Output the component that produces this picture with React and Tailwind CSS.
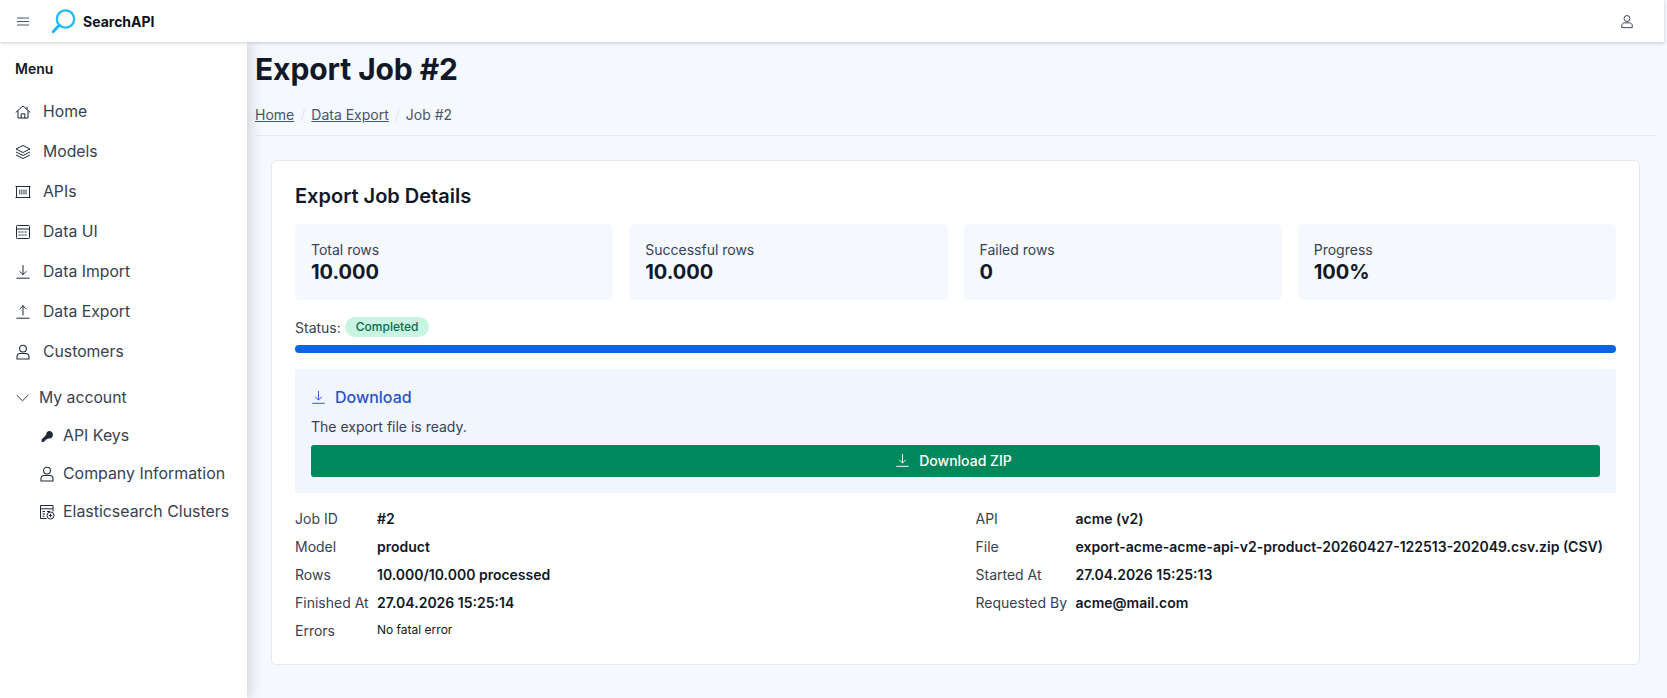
import React from "react";

function HomeIcon({ className }) {
  return (
    <svg className={className} viewBox="0 0 16 16" fill="none" stroke="currentColor" strokeWidth="1" strokeLinejoin="round" strokeLinecap="round">
      <path d="M1 8.2 8 2l7 6.2" />
      <path d="M12 3v2.4" />
      <path d="M3 7v7h10V7" />
      <path d="M6.2 14V9.8h3.6V14" />
    </svg>
  );
}

function LayersIcon({ className }) {
  return (
    <svg className={className} viewBox="0 0 16 16" fill="none" stroke="currentColor" strokeWidth="1" strokeLinejoin="round">
      <path d="M8 1.5 15 5 8 8.5 1 5z" />
      <path d="M1 8l7 3.5L15 8" />
      <path d="M1 11l7 3.5 7-3.5" />
    </svg>
  );
}

function ApiIcon({ className }) {
  return (
    <svg className={className} viewBox="0 0 16 16" fill="none" stroke="currentColor" strokeWidth="1">
      <path d="M0.5 2.5h15M0.5 13.5h15M1.5 2.5v11M14.5 2.5v11" />
      <path d="M4.8 5.5v5M6.9 5.5v5M9 5.5v5M11.1 5.5v5" strokeWidth="0.9" />
    </svg>
  );
}

function TableIcon({ className }) {
  return (
    <svg className={className} viewBox="0 0 16 16" fill="none" stroke="currentColor" strokeWidth="1">
      <rect x="1.5" y="1.5" width="13" height="13" rx="0.8" />
      <path d="M1.5 5h13" />
      <path d="M3.5 8h9M3.5 11h9" strokeDasharray="2 1" />
    </svg>
  );
}

function DownloadIcon({ className }) {
  return (
    <svg className={className} viewBox="0 0 16 16" fill="none" stroke="currentColor" strokeWidth="1" strokeLinecap="round" strokeLinejoin="round">
      <path d="M8 1.5v9M4.8 7.5 8 10.7l3.2-3.2" />
      <path d="M1.8 14.2h12.4" />
    </svg>
  );
}

function UploadIcon({ className }) {
  return (
    <svg className={className} viewBox="0 0 16 16" fill="none" stroke="currentColor" strokeWidth="1" strokeLinecap="round" strokeLinejoin="round">
      <path d="M8 11V1.8M4.8 5 8 1.8 11.2 5" />
      <path d="M1.8 14.2h12.4" />
    </svg>
  );
}

function UserIcon({ className }) {
  return (
    <svg className={className} viewBox="0 0 16 16" fill="none" stroke="currentColor" strokeWidth="1.1" strokeLinejoin="round">
      <circle cx="8" cy="4.6" r="3.4" />
      <path d="M2 15v-2.2c0-1.8 1.4-3.3 3.2-3.3h5.6c1.8 0 3.2 1.5 3.2 3.3V15z" />
    </svg>
  );
}

function KeyIcon({ className }) {
  return (
    <svg className={className} viewBox="0 0 16 16" fill="currentColor">
      <path d="M10 3a3.8 3.8 0 1 1-1 7.4l-1.2 1.2H6.6v1.2H5.2V14H2.6v-2.4l4.6-4.8A3.8 3.8 0 0 1 10 3z" />
    </svg>
  );
}

function ClusterIcon({ className }) {
  return (
    <svg className={className} viewBox="0 0 16 16" fill="none" stroke="currentColor" strokeWidth="1">
      <path d="M7.5 14.5H1.5v-13h12.5v6" />
      <path d="M1.5 4.8h12.5" />
      <path d="M3.5 7.5h2.5M3.5 10h2.5M3.5 12.2h2M8 7.5h3" />
      <circle cx="11.5" cy="11.5" r="3.5" fill="white" />
      <path d="M11.5 9.8v3.4M9.8 11.5h3.4" />
    </svg>
  );
}

function ChevronIcon({ className }) {
  return (
    <svg className={className} viewBox="0 0 14 8" fill="none" stroke="currentColor" strokeWidth="1">
      <path d="M0.7 0.8 7 7l6.3-6.2" />
    </svg>
  );
}

function MenuIcon({ className }) {
  return (
    <svg className={className} viewBox="0 0 12 9" fill="none" stroke="currentColor" strokeWidth="1">
      <path d="M0 1h12M0 4.5h12M0 8h12" />
    </svg>
  );
}

function Logo() {
  return (
    <svg width="25" height="25" viewBox="0 0 25 25" fill="none">
      <circle cx="14.5" cy="10" r="8.7" stroke="#1cbcf2" strokeWidth="2.3" />
      <path d="M8 16.5 2.3 22.5" stroke="#1cbcf2" strokeWidth="3.2" strokeLinecap="round" />
    </svg>
  );
}

const navItems = [
  { label: "Home", icon: HomeIcon },
  { label: "Models", icon: LayersIcon },
  { label: "APIs", icon: ApiIcon },
  { label: "Data UI", icon: TableIcon },
  { label: "Data Import", icon: DownloadIcon },
  { label: "Data Export", icon: UploadIcon },
  { label: "Customers", icon: UserIcon },
];

const subItems = [
  { label: "API Keys", icon: KeyIcon },
  { label: "Company Information", icon: UserIcon },
  { label: "Elasticsearch Clusters", icon: ClusterIcon },
];

const stats = [
  { label: "Total rows", value: "10.000" },
  { label: "Successful rows", value: "10.000" },
  { label: "Failed rows", value: "0" },
  { label: "Progress", value: "100%" },
];

const leftRows = [
  ["Job ID", "#2"],
  ["Model", "product"],
  ["Rows", "10.000/10.000 processed"],
  ["Finished At", "27.04.2026 15:25:14"],
];

const rightRows = [
  ["API", "acme (v2)"],
  ["File", "export-acme-acme-api-v2-product-20260427-122513-202049.csv.zip (CSV)"],
  ["Started At", "27.04.2026 15:25:13"],
  ["Requested By", "acme@mail.com"],
];

export default function App() {
  return (
    <div className="h-[698px] overflow-hidden bg-[#f5f8fc] text-[#111827] font-['Inter',sans-serif]">
      <div className="w-[1664px]">
        <header className="h-[42px] bg-white flex items-center justify-between pl-[17px] pr-[30px] shadow-[0_1px_3px_rgba(100,116,139,0.35)] relative z-20">
          <div className="flex items-center">
            <MenuIcon className="w-[12px] h-[9px] text-[#475569]" />
            <div className="ml-[22px]"><Logo /></div>
            <span className="ml-[7px] text-[14px] font-bold text-[#0b1320]">SearchAPI</span>
          </div>
          <UserIcon className="w-[14px] h-[15px] text-[#374151]" />
        </header>
        <div className="flex h-[656px]">
          <aside className="w-[247px] shrink-0 bg-white shadow-[2px_0_12px_rgba(100,116,139,0.3)] relative z-10 pl-[16px] pt-[18px] text-[#374151]">
            <div className="-ml-[1px] text-[14px] leading-[18px] font-semibold text-[#111827] mb-[14px]">Menu</div>
            <nav className="flex flex-col">
              {navItems.map(({ label, icon: Icon }) => (
                <div key={label} className="h-[40px] -ml-[1px] flex items-center gap-[12px] text-[15.75px]">
                  <Icon className="w-[16px] h-[16px] text-[#1f2937]" />
                  {label}
                </div>
              ))}
              <div className="h-[40px] mt-[6px] flex items-center gap-[10px] text-[15.75px]">
                <ChevronIcon className="w-[13px] h-[8px] text-[#1f2937]" />
                My account
              </div>
              {subItems.map(({ label, icon: Icon }) => (
                <div key={label} className="h-[38px] -mt-[1px] mb-[1px] ml-[23px] flex items-center gap-[8px] text-[15.9px]">
                  <Icon className="w-[16px] h-[16px] text-[#1f2937]" />
                  {label}
                </div>
              ))}
            </nav>
          </aside>
          <main className="flex-1 min-w-0 px-[8px]">
            <div className="pt-[9px] h-[94px] border-b border-[#e2e8f0]">
              <h1 className="text-[30px] leading-[36px] font-bold text-[#111827] tracking-[-0.1px]">Export Job #2</h1>
              <div className="mt-[17px] text-[14px] flex items-center gap-[6px] text-[#4b5563]">
                <a className="underline text-[#475569]">Home</a>
                <span className="text-[#e2e8f0]">/</span>
                <a className="underline text-[#475569]">Data Export</a>
                <span className="text-[#e2e8f0]">/</span>
                <span>Job #2</span>
              </div>
            </div>
            <section className="mt-[24px] ml-[16px] w-[1369px] h-[505px] bg-white rounded-[5px] border border-[#e2e8f4] px-[23px] pt-[23px]">
              <h2 className="text-[20px] font-semibold leading-[24px]">Export Job Details</h2>
              <div className="mt-[16px] grid grid-cols-4 gap-[16px]">
                {stats.map((s) => (
                  <div key={s.label} className="h-[76px] bg-[#f5f8fc] rounded-[5px] px-[16px] pt-[17px]">
                    <div className="text-[14px] leading-[18px] text-[#374151]">{s.label}</div>
                    <div className="text-[20px] leading-[26px] font-bold">{s.value}</div>
                  </div>
                ))}
              </div>
              <div className="mt-[17px] flex items-center gap-[4px] text-[14px] h-[20px] text-[#374151]">
                Status:
                <span className="bg-[#c9f4e1] text-[#0a6a4b] text-[12px] font-medium rounded-full px-[11px] h-[20px] flex items-center">Completed</span>
              </div>
              <div className="mt-[8px] h-[8px] rounded-full bg-[#0c64e0]" />
              <div className="mt-[16px] h-[124px] bg-[#f1f5fe] px-[16px] pt-[17px]">
                <div className="flex items-center gap-[9px] text-[16px] leading-[22px] font-medium text-[#2a53c4]">
                  <DownloadIcon className="w-[15px] h-[15px]" />
                  Download
                </div>
                <div className="mt-[9px] leading-[20px] text-[14px] text-[#374151]">The export file is ready.</div>
                <button className="mt-[8px] w-full h-[32px] pr-[4px] pb-[1px] rounded-[3px] bg-[#00885c] text-white text-[14px] font-medium flex items-center justify-center gap-[9px]">
                  <DownloadIcon className="w-[15px] h-[15px]" />
                  Download ZIP
                </button>
              </div>
              <div className="mt-[11px] grid grid-cols-2 text-[14px]">
                <div>
                  {leftRows.map(([k, v]) => (
                    <div key={k} className="h-[28px] flex items-center">
                      <span className="w-[82px] text-[#374151]">{k}</span>
                      <span className="font-semibold">{v}</span>
                    </div>
                  ))}
                  <div className="h-[28px] flex items-center">
                    <span className="w-[82px] text-[#374151]">Errors</span>
                    <span className="text-[12px]">No fatal error</span>
                  </div>
                </div>
                <div className="ml-[20px]">
                  {rightRows.map(([k, v]) => (
                    <div key={k} className="h-[28px] flex items-center">
                      <span className="w-[100px] text-[#374151]">{k}</span>
                      <span className="font-semibold">{v}</span>
                    </div>
                  ))}
                </div>
              </div>
            </section>
          </main>
        </div>
      </div>
    </div>
  );
}
